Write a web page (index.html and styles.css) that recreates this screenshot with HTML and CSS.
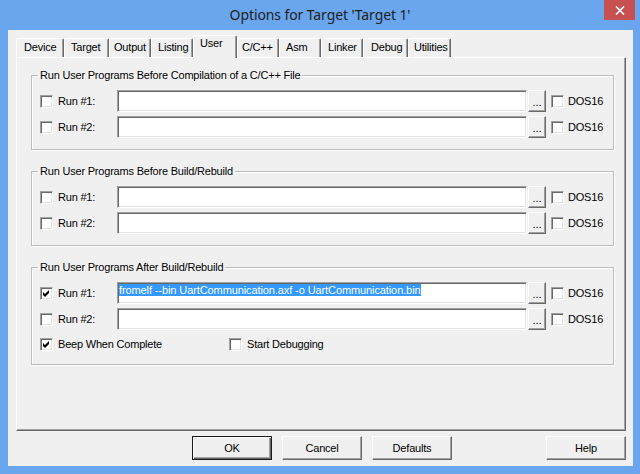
FILE: index.html
```html
<!DOCTYPE html>
<html>
<head>
<meta charset="utf-8">
<title>Options for Target 'Target 1'</title>
<link rel="stylesheet" href="styles.css">
</head>
<body>
<div class="window">
  <div class="titlebar">
    <span class="title">Options for Target 'Target 1'</span>
    <span class="close">
      <svg width="10" height="9" viewBox="0 0 10 9"><path d="M1 0.5 L9 8.5 M9 0.5 L1 8.5" stroke="#fff" stroke-width="1.6" fill="none"/></svg>
    </span>
  </div>
  <div class="client">
    <div class="tabs">
      <div class="tab">Device</div>
      <div class="tab">Target</div>
      <div class="tab">Output</div>
      <div class="tab">Listing</div>
      <div class="tab tab-active">User</div>
      <div class="tab">C/C++</div>
      <div class="tab">Asm</div>
      <div class="tab">Linker</div>
      <div class="tab">Debug</div>
      <div class="tab">Utilities</div>
    </div>
    <div class="panel">
      <fieldset class="group">
        <legend>Run User Programs Before Compilation of a C/C++ File</legend>
        <div class="row">
          <span class="cb"></span><span class="lbl">Run #1:</span><span class="field"></span><span class="browse">...</span><span class="cb cb-dos"></span><span class="dos">DOS16</span>
        </div>
        <div class="row">
          <span class="cb"></span><span class="lbl">Run #2:</span><span class="field"></span><span class="browse">...</span><span class="cb cb-dos"></span><span class="dos">DOS16</span>
        </div>
      </fieldset>
      <fieldset class="group">
        <legend>Run User Programs Before Build/Rebuild</legend>
        <div class="row">
          <span class="cb"></span><span class="lbl">Run #1:</span><span class="field"></span><span class="browse">...</span><span class="cb cb-dos"></span><span class="dos">DOS16</span>
        </div>
        <div class="row">
          <span class="cb"></span><span class="lbl">Run #2:</span><span class="field"></span><span class="browse">...</span><span class="cb cb-dos"></span><span class="dos">DOS16</span>
        </div>
      </fieldset>
      <fieldset class="group">
        <legend>Run User Programs After Build/Rebuild</legend>
        <div class="row">
          <span class="cb"><svg class="check" width="11" height="11" viewBox="0 0 11 11"><path d="M2 4 L4 6 L8 2 L8 5 L4 9 L2 7 Z" fill="#000"/></svg></span><span class="lbl">Run #1:</span><span class="field"><span class="sel">fromelf --bin UartCommunication.axf -o UartCommunication.bin</span></span><span class="browse">...</span><span class="cb cb-dos"></span><span class="dos">DOS16</span>
        </div>
        <div class="row">
          <span class="cb"></span><span class="lbl">Run #2:</span><span class="field"></span><span class="browse">...</span><span class="cb cb-dos"></span><span class="dos">DOS16</span>
        </div>
        <div class="row row-opts">
          <span class="opt"><span class="cb"><svg class="check" width="11" height="11" viewBox="0 0 11 11"><path d="M2 4 L4 6 L8 2 L8 5 L4 9 L2 7 Z" fill="#000"/></svg></span><span>Beep When Complete</span></span>
          <span class="opt"><span class="cb"></span><span>Start Debugging</span></span>
        </div>
      </fieldset>
    </div>
    <div class="buttons">
      <span class="btn btn-default">OK</span>
      <span class="btn">Cancel</span>
      <span class="btn">Defaults</span>
      <span class="btn btn-help">Help</span>
    </div>
  </div>
</div>
</body>
</html>
```
FILE: styles.css
```css
* { box-sizing: border-box; }
html, body { margin: 0; padding: 0; }
body {
  width: 640px;
  height: 474px;
  overflow: hidden;
  background: #6aa6ee;
  font-family: "Liberation Sans", Arial, sans-serif;
  font-size: 11px;
  letter-spacing: -0.2px;
  color: #000;
}
.window {
  display: flex;
  flex-direction: column;
  height: 474px;
  padding: 0 7px 8px 8px;
}
.titlebar {
  height: 30px;
  margin: 0 -7px 0 -8px;
  display: grid;
  grid-template-columns: 1fr auto 1fr;
  align-items: start;
}
.title {
  grid-column: 2;
  font-family: "Noto Sans", "Open Sans", sans-serif;
  font-size: 14px;
  letter-spacing: -0.1px;
  line-height: 30px;
  color: #1e1e1e;
}
.close {
  grid-column: 3;
  justify-self: end;
  width: 31px;
  height: 20px;
  margin-right: 5px;
  background: #c75050;
  display: flex;
  align-items: center;
  justify-content: center;
}
.client {
  flex: 1;
  background: #f0f0f0;
  display: flex;
  flex-direction: column;
  padding: 5px 7px 6px 8px;
}
.tabs {
  display: flex;
  align-items: flex-end;
  height: 22px;
  position: relative;
  z-index: 1;
}
.tab {
  height: 19px;
  padding-left: 6px;
  line-height: 16px;
  border-top: 1px solid #fff;
  border-left: 1px solid #fff;
  border-right: 1px solid #696969;
  box-shadow: inset -1px 0 #a0a0a0;
  border-radius: 2px 2px 0 0;
  white-space: nowrap;
}
.tab:nth-child(1) { width: 48px; padding-left: 7px; }
.tab:nth-child(2) { width: 45px; }
.tab:nth-child(3) { width: 42px; padding-left: 4px; }
.tab:nth-child(4) { width: 42px; }
.tab:nth-child(5) { width: 44px; }
.tab:nth-child(6) { width: 42px; padding-left: 4px; }
.tab:nth-child(7) { width: 42px; }
.tab:nth-child(8) { width: 42px; }
.tab:nth-child(9) { width: 45px; padding-left: 7px; }
.tab:nth-child(10) { width: 43px; padding-left: 5px; }
.tab-active {
  height: 23px;
  margin-bottom: -1px;
  line-height: 14px;
  background: #f0f0f0;
}
.panel {
  flex: 1;
  border-top: 1px solid #fff;
  border-left: 1px solid #fff;
  border-right: 1px solid #696969;
  border-bottom: 1px solid #696969;
  box-shadow: inset -1px -1px #a0a0a0;
  padding: 11px 11px 0 14px;
  display: flex;
  flex-direction: column;
  gap: 15px;
}
.group {
  margin: 0;
  min-width: 0;
  padding: 8px 10px 11px 8px;
  border: 1px solid #bcbcbc;
  box-shadow: inset 1px 1px #fff, 1px 1px #fff;
}
.group legend {
  padding: 0 2px;
  margin-left: -2px;
  line-height: 13px;
}
.row {
  display: flex;
  align-items: center;
  height: 22px;
}
.row + .row { margin-top: 4px; }
.cb {
  width: 13px;
  height: 13px;
  flex: none;
  background: #fff;
  border-top: 1px solid #a0a0a0;
  border-left: 1px solid #a0a0a0;
  border-bottom: 1px solid #fff;
  border-right: 1px solid #fff;
  box-shadow: inset 1px 1px #696969, inset -1px -1px #e3e3e3;
  display: flex;
}
.check { display: block; }
.lbl {
  width: 59px;
  margin-left: 5px;
  flex: none;
}
.field {
  width: 410px;
  height: 22px;
  flex: none;
  background: #fff;
  border-top: 1px solid #a0a0a0;
  border-left: 1px solid #a0a0a0;
  border-bottom: 1px solid #fff;
  border-right: 1px solid #fff;
  box-shadow: inset 1px 1px #696969, inset -1px -1px #e3e3e3;
  padding: 1px 0 0 1px;
  line-height: 13px;
  white-space: nowrap;
  overflow: hidden;
}
.sel {
  background: #3399ff;
  color: #fff;
  letter-spacing: -0.1px;
}
.browse {
  width: 18px;
  height: 22px;
  margin-left: 1px;
  flex: none;
  background: #f0f0f0;
  border-top: 1px solid #fff;
  border-left: 1px solid #fff;
  border-bottom: 1px solid #696969;
  border-right: 1px solid #696969;
  box-shadow: inset -1px -1px #a0a0a0;
  text-align: center;
  line-height: 20px;
  padding-top: 1px;
  letter-spacing: 0;
}
.cb-dos { margin-left: 5px; }
.dos { margin-left: 4px; }
.row-opts {
  height: 18px;
  margin-top: 5px;
}
.row + .row-opts { margin-top: 5px; }
.opt {
  display: flex;
  align-items: center;
  gap: 5px;
  width: 189px;
}
.buttons {
  display: flex;
  gap: 10px;
  margin-top: 5px;
  padding-left: 176px;
}
.btn {
  width: 80px;
  height: 24px;
  background: #f0f0f0;
  border-top: 1px solid #fff;
  border-left: 1px solid #fff;
  border-bottom: 1px solid #696969;
  border-right: 1px solid #696969;
  box-shadow: inset -1px -1px #a0a0a0;
  display: flex;
  align-items: center;
  justify-content: center;
}
.btn-default {
  border: 1px solid #1a1a1a;
  box-shadow: inset 1px 1px #fff, inset -1px -1px #696969, inset -2px -2px #a0a0a0;
}
.btn-help { margin-left: auto; }
```
